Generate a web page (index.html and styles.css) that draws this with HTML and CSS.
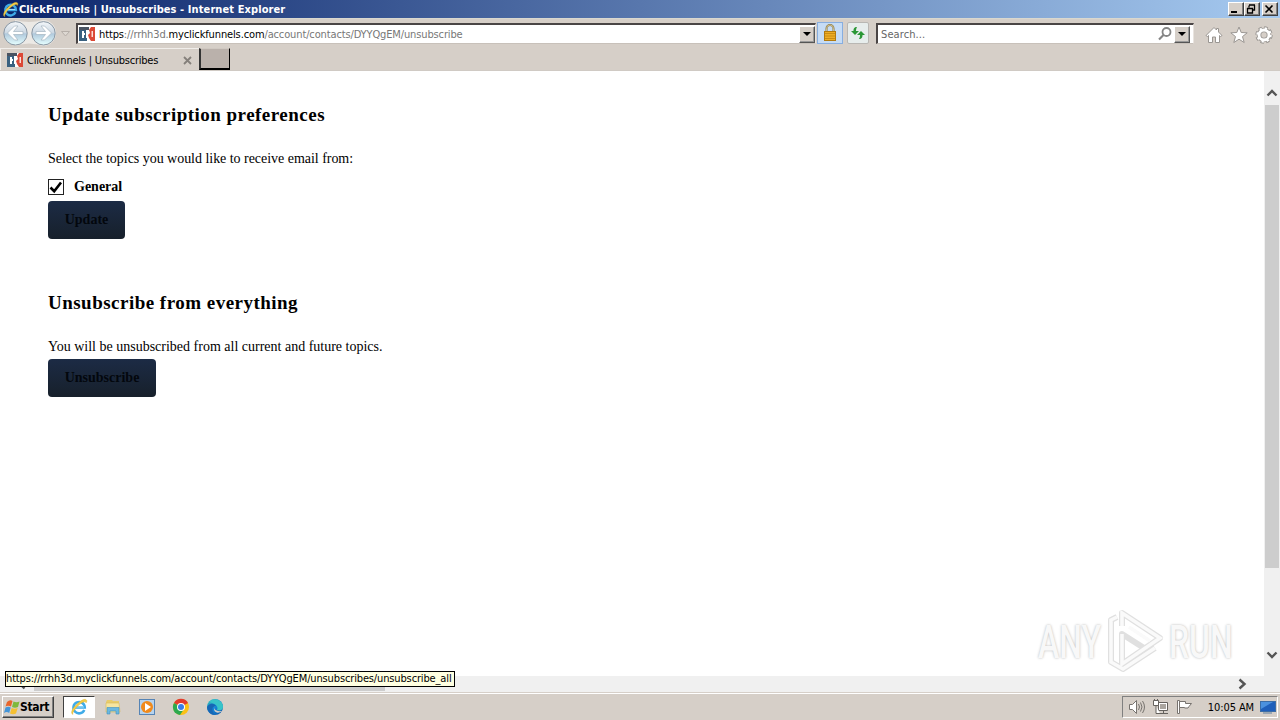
FILE: index.html
```
<!DOCTYPE html>
<html lang="en">

<head>
    <meta charset="utf-8">
    <title>ClickFunnels | Unsubscribes</title>
    <link rel="stylesheet" href="styles.css">
</head>

<body>
    <!-- shared icons -->
    <svg class="defs" width="0" height="0">
        <linearGradient id="orb" x2="0" y2="1">
            <stop offset="0" stop-color="#f4f7fa" />
            <stop offset=".48" stop-color="#ccd8e3" />
            <stop offset=".52" stop-color="#b0c9dc" />
            <stop offset="1" stop-color="#e6ffff" />
        </linearGradient>
        <linearGradient id="edge-fill" x2="1" y2="1">
            <stop offset="0" stop-color="#35c1b1" />
            <stop offset=".5" stop-color="#1687d9" />
            <stop offset="1" stop-color="#0c4fa0" />
        </linearGradient>
        <symbol id="ie" viewBox="0 0 18 18">
            <path d="M14.300 12a5.700 5.700 0 1 1 .5-2.500H5" fill="none" stroke="#3fabe8" stroke-width="2.500" />
            <path d="M5 9h9" stroke="#a5e0fa" stroke-width="1" />
            <path d="M3 16.500c-3-1-1-6 4-10.500s8-5.500 9.500-4c.7.8.3 2-.5 3 0-2-3-1.500-7 2s-7 8-6 9.500z" fill="#f3cd45" stroke="#d0a024" stroke-width=".3" />
        </symbol>
        <symbol id="cf" viewBox="0 0 16 14">
            <path d="M0 0h16v14H0z" fill="#fff" />
            <path d="M0 0h10v3H7v8h1v3H0z" fill="#3a6180" />
            <path d="M0 0h10v3H0z" fill="#4a5361" />
            <path d="M3 4h2v2h1v2H5v3H3z" fill="#fff" />
            <path d="M16 0h-4l-2 3 1 3-2 2 1 3 2 3h4z" fill="#dc4936" />
            <path d="M12.500 4h1.500v6h-1.500z" fill="#fbdcd4" />
        </symbol>
    </svg>

    <div class="title-bar">
        <svg class="title-icon"><use href="#ie" /></svg>
        <span class="title-text">ClickFunnels | Unsubscribes - Internet Explorer</span>
        <div class="window-buttons">
            <button class="win-btn"><svg width="12" height="10"><path d="M2 7h6v2H2z" /></svg></button>
            <button class="win-btn"><svg width="12" height="10"><path d="M4 1h6M4 1.500v2M9.500 1v5H8M2 4.500h6M2.500 4v5h5V4" fill="none" stroke="#000" stroke-width="1.300" /></svg></button>
            <button class="win-btn close"><svg width="12" height="10"><path d="M2.500 1.500l7 7M9.500 1.500l-7 7" stroke="#000" stroke-width="1.600" /></svg></button>
        </div>
    </div>

    <div class="nav-bar">
        <svg class="nav-arrows" width="72" height="28" viewBox="0 0 72 28">
            <path d="M15 1Q29 5 43 1a12.500 12.500 0 0 1 0 26Q29 22 15 27z" fill="#ece9e5" />
            <g fill="url(#orb)" stroke="#8997a4">
                <circle cx="15.500" cy="14.300" r="11.700" />
                <circle cx="43.500" cy="14.300" r="11.700" />
            </g>
            <g fill="#fff" stroke="#a5b4c0" stroke-width=".7">
                <path d="M7.500 14l7-7h3.500l-4.500 5.500H23v3h-9.500l4.500 5.500h-3.500z" />
                <path d="M51.500 14l-7-7H41l4.500 5.500H36v3h9.500L41 21h3.500z" />
            </g>
            <path d="M61.500 12.500h8L65.500 17z" fill="#ddd8d2" stroke="#b6afa9" />
        </svg>
        <div class="field address">
            <svg class="favicon"><use href="#cf" /></svg>
            <span class="url"><b>https</b>://rrhh3d.<b>myclickfunnels.com</b>/account/contacts/DYYQgEM/unsubscribe</span>
            <button class="drop"></button>
        </div>
        <div class="tool lock">
            <svg width="16" height="18" viewBox="0 0 16 18">
                <path d="M4.500 8V4.500a3.500 3.500 0 0 1 7 0V8" fill="none" stroke="#8c7a45" stroke-width="2" />
                <path d="M4.500 8V4.500a3.500 3.500 0 0 1 7 0V8" fill="none" stroke="#e6d9a8" stroke-width=".7" />
                <rect x="2.500" y="7.500" width="11" height="9" fill="#eead25" stroke="#b17a10" />
                <path d="M3 9.500h10M3 12h10M3 14.500h10" stroke="#c98c14" />
            </svg>
        </div>
        <div class="tool refresh">
            <svg width="16" height="16" viewBox="0 0 16 16" fill="#2b9735">
                <path d="M7 2C4 2 3.500 4 3.500 6H1l4 4 4-4H6c0-1 0-2 1-4z" />
                <path d="M9 14c3 0 3.500-2 3.500-4H15l-4-4-4 4h3c0 1 0 2-1 4z" />
            </svg>
        </div>
        <div class="field search">
            <span class="placeholder">Search...</span>
            <svg width="16" height="16" viewBox="0 0 16 16" fill="none" stroke="#858585" stroke-width="1.800">
                <circle cx="9.500" cy="6" r="4" />
                <path d="M6.500 9L2 13.500" stroke-width="2.200" />
            </svg>
            <button class="drop"></button>
        </div>
        <div class="nav-tools">
            <svg width="18" height="18" viewBox="0 0 18 18" fill="#fff" stroke="#9a9692">
                <path d="M1 9.500L9 1.500l2.500 2.500V2.500h2V6L17 9.500l-1.500 1-1-1v7H10.500V11h-3v5.500H3.500v-7l-1 1z" />
            </svg>
            <svg width="18" height="18" viewBox="0 0 18 18" fill="#fff" stroke="#9a9692">
                <path d="M9 1l2.200 5.500 6 .3-4.700 3.800 1.700 5.900L9 13.200l-5.200 3.300 1.700-5.900L.8 6.800l6-.3z" />
            </svg>
            <svg width="18" height="18" viewBox="0 0 18 18">
                <g fill="none">
                    <circle cx="9" cy="9" r="7" stroke="#9a9692" stroke-width="3.400" stroke-dasharray="3.300 2.198" />
                    <circle cx="9" cy="9" r="5" stroke="#9a9692" stroke-width="4.600" />
                    <circle cx="9" cy="9" r="6.500" stroke="#fff" stroke-width="2.400" stroke-dasharray="2.100 3.005" />
                    <circle cx="9" cy="9" r="5" stroke="#fff" stroke-width="2.800" />
                </g>
            </svg>
        </div>
    </div>

    <div class="tab-bar">
        <div class="tab">
            <svg class="favicon"><use href="#cf" /></svg>
            <span class="tab-title">ClickFunnels | Unsubscribes</span>
            <svg width="9" height="9"><path d="M1 1l7 7M8 1L1 8" stroke="#85807b" stroke-width="1.800" /></svg>
        </div>
        <div class="new-tab"></div>
    </div>

    <div class="viewport">
        <div class="page">
            <h3>Update subscription preferences</h3>
            <p class="topics-text">Select the topics you would like to receive email from:</p>
            <div class="topic">
                <svg width="16" height="16">
                    <rect x=".5" y=".5" width="15" height="15" fill="#fff" stroke="#222" />
                    <path d="M2.500 8.500l3.700 3.700L13 3.500" fill="none" stroke="#000" stroke-width="2.600" />
                </svg>
                <label>General</label>
            </div>
            <button class="btn update">Update</button>

            <h3 class="second">Unsubscribe from everything</h3>
            <p>You will be unsubscribed from all current and future topics.</p>
            <button class="btn unsubscribe">Unsubscribe</button>
        </div>
        <div class="v-scroll">
            <svg width="12" height="8"><path d="M1.500 6.500L6 2l4.500 4.500" /></svg>
            <div class="v-thumb"></div>
            <svg width="12" height="8"><path d="M1.500 1.500L6 6l4.500-4.500" /></svg>
        </div>
        <div class="watermark">
            <span class="any">ANY</span>
            <svg width="60" height="68" viewBox="0 0 60 68" fill="none">
                <g stroke="#e0e0e0" stroke-width="6" stroke-linejoin="round">
                    <path d="M16 18V5l38 25-38 26V26l22 14" />
                    <path d="M11 9l-6 3v42l12 7 32-21" />
                </g>
                <g stroke="#fafafa" stroke-width="3.500">
                    <path d="M16 18V5l38 25-38 26V26" />
                    <path d="M11 9l-6 3v42l12 7 32-21M23 19l21 14" />
                </g>
            </svg>
            <span class="run">RUN</span>
        </div>
    </div>
    <div class="h-scroll">
        <svg width="8" height="12"><path d="M6.500 1.500L2 6l4.500 4.500" /></svg>
        <div class="h-thumb"></div>
        <svg width="9" height="12"><path d="M1.500 1.500L6.500 6l-5 4.500" /></svg>
    </div>
    <div class="status">https://rrhh3d.myclickfunnels.com/account/contacts/DYYQgEM/unsubscribes/unsubscribe_all</div>

    <div class="taskbar">
        <button class="start">
            <svg width="16" height="16" viewBox="0 0 16 16">
                <path d="M3 3q3-3 5.500-1L7 7.500q-3-1.500-5.500 0z" fill="#e8652b" />
                <path d="M9.500 2.500q3 1.500 6 0L14 8q-3 1.500-6 0z" fill="#7fb93c" />
                <path d="M1.500 8.500q3-1.500 5.200 0L5.200 14q-2.500-2-5.200 0z" fill="#4495d8" />
                <path d="M7.700 9q3 1.500 6 0L12 14.500q-3 1.500-6 0z" fill="#f5c032" />
            </svg>
            Start
        </button>
        <div class="task active"><svg width="18" height="18"><use href="#ie" /></svg></div>
        <div class="task">
            <svg width="18" height="18" viewBox="0 0 18 18">
                <path d="M2 4l1-2h5l1 1h6v3H2z" fill="#e8cc6c" />
                <path d="M2 5h13l1 9H2z" fill="#f6e5a0" stroke="#d7b95a" stroke-width=".6" />
                <path d="M3 16V9.500h12V16h-3v-3H6v3z" fill="#6bb8e0" stroke="#3f91bd" stroke-width=".6" />
            </svg>
        </div>
        <div class="task">
            <svg width="18" height="18" viewBox="0 0 18 18">
                <rect x="1.500" y="1.500" width="15" height="15" fill="#b6d3ee" stroke="#5684b5" />
                <circle cx="9" cy="9" r="6" fill="#f08a1c" />
                <path d="M7 5l6 4-6 4z" fill="#fff" />
            </svg>
        </div>
        <div class="task">
            <svg width="18" height="18" viewBox="0 0 18 18">
                <circle cx="9" cy="9" r="8" fill="#fbc116" />
                <path d="M9 9L2 5a8 8 0 0 1 14 0z" fill="#e33b2e" />
                <path d="M9 9L2 5a8 8 0 0 0 6 12l4-6z" fill="#2da94f" />
                <circle cx="9" cy="9" r="4" fill="#fff" />
                <circle cx="9" cy="9" r="3" fill="#3a7de8" />
            </svg>
        </div>
        <div class="task">
            <svg width="18" height="18" viewBox="0 0 18 18">
                <circle cx="9" cy="9" r="8" fill="url(#edge-fill)" />
                <path d="M3 4a8 8 0 0 1 14 5c0 3-3 4-6 3 2-4-3-7-8-8z" fill="#38c4c8" />
                <path d="M9 8c-2 2 0 6 7 5-5 4-10 0-7-5z" fill="#d5cec7" />
                <path d="M1 9c2-4 7-4 9-1-4 0-5 4-1 9-5 0-8-4-8-8z" fill="#1767b5" />
            </svg>
        </div>
        <div class="tray">
            <svg width="18" height="16" viewBox="0 0 18 16" fill="#fff" stroke="#77736f">
                <path d="M1.500 5.500h3l4-4v13l-4-4h-3z" />
                <path d="M10.500 5q2 3 0 6M12.500 3.500q3 4.500 0 9M14.500 2q4 6 0 12" fill="none" />
            </svg>
            <svg width="18" height="16" viewBox="0 0 18 16" fill="#fff" stroke="#65615d">
                <path d="M6.500 3.500h9v8h-9zM8 14.500h8M11.500 12v2" />
                <path d="M8 5h6v5H8z" fill="#aaa59f" stroke="none" />
                <path d="M1.500 1.500h5v5h-5zM2.500 0v2M5.500 0v2M4 6.500v8h4" />
            </svg>
            <svg width="18" height="16" viewBox="0 0 18 16" fill="#fff" stroke="#77736f">
                <path d="M1.500 1.500h2v13h-2z" />
                <path d="M3.500 2.500h6v2h6l-2.500 3-1 1.500h-3.500V8.500h-5z" />
            </svg>
            <span class="clock">10:05 AM</span>
            <svg width="16" height="14" viewBox="0 0 16 14">
                <rect x=".5" y="1.500" width="15" height="10" fill="#1f5fba" stroke="#3c6da6" />
                <path d="M1 2h12L1 9z" fill="#4b91de" />
                <path d="M3 13h9" stroke="#5f7f9d" />
            </svg>
        </div>
    </div>
</body>

</html>
```
FILE: styles.css
```
* {
    box-sizing: border-box;
}

body {
    margin: 0;
    width: 1280px;
    height: 720px;
    display: flex;
    flex-direction: column;
    overflow: hidden;
    position: relative;
    background: #fff;
    font: 11px "DejaVu Sans Condensed", "DejaVu Sans", sans-serif;
    font-stretch: condensed;
    color: #000;
    white-space: nowrap;
}

svg {
    flex: none;
    display: block;
}

button {
    margin: 0;
    padding: 0;
    font: inherit;
    color: #000;
}

.defs {
    position: absolute;
}

/* Title bar */
.title-bar {
    height: 18px;
    display: flex;
    align-items: center;
    padding: 0 2px;
    background: linear-gradient(to right, #0a246a, #a6caf0);
    color: #fff;
    font-weight: bold;
}

.title-icon {
    width: 17px;
    height: 17px;
}

.title-text {
    letter-spacing: 0.09px;
}

.window-buttons {
    display: flex;
    margin-left: auto;
}

.win-btn {
    width: 16px;
    height: 14px;
    background: #d6cfc8;
    border: 1px solid;
    border-color: #fff #404040 #404040 #fff;
    box-shadow: inset -1px -1px #808080;
}

.close {
    margin-left: 2px;
}

/* Address row */
.nav-bar {
    height: 30px;
    display: flex;
    align-items: flex-start;
    background: #d6cfc8;
    border-top: 1px solid #d9d8cf;
}

.nav-arrows {
    margin-right: 4px;
}

.field {
    height: 21px;
    margin-top: 4px;
    display: flex;
    align-items: center;
    background: #fff;
    border: 1px solid;
    border-width: 2px 1px 1px 2px;
    border-color: #4a4545 #e9e4df #c8c1ba #4a4545;
}

.address {
    width: 740px;
    padding-left: 1px;
}

.favicon {
    width: 16px;
    height: 14px;
}

.url {
    margin-left: 4px;
    color: #777;
    letter-spacing: -0.13px;
}

.url b {
    font-weight: normal;
    color: #000;
}

.drop {
    width: 16px;
    height: 17px;
    margin-left: auto;
    background: #d6cfc8;
    border: 1px solid;
    border-color: #fff #555 #555 #fff;
    box-shadow: inset -1px -1px #999;
    display: flex;
    align-items: center;
    justify-content: center;
}

.drop::after {
    content: "";
    border: 4px solid transparent;
    border-top-color: #000;
    border-bottom: 0;
}

.tool {
    height: 22px;
    margin-top: 3px;
    display: flex;
    align-items: center;
    justify-content: center;
}

.lock {
    width: 26px;
    margin-left: 1px;
    background: #c6dcf5;
    border: 1px solid #87aee0;
}

.refresh {
    width: 22px;
    margin-left: 4px;
    background: #e7edec;
    border: 1px solid #b9b7b3;
    border-radius: 2px;
}

.search {
    width: 318px;
    margin-left: 7px;
    padding-right: 3px;
}

.placeholder {
    margin-left: 3px;
    margin-right: auto;
    color: #666;
    letter-spacing: 0.1px;
}

.search .drop {
    margin-left: 1px;
}

.nav-tools {
    display: flex;
    gap: 7px;
    margin: 7px 0 0 11px;
}

/* Tabs */
.tab-bar {
    height: 23px;
    display: flex;
    background: #d6cfc8;
    border-bottom: 1px solid #d0cac4;
}

.tab {
    width: 199px;
    display: flex;
    align-items: center;
    padding: 1px 7px 0 6px;
    border-top: 1px solid #f1eeeb;
    border-left: 1px solid #f1eeeb;
}

.tab-title {
    margin: 0 auto 0 4px;
    letter-spacing: -0.23px;
}

.new-tab {
    width: 31px;
    height: 22px;
    background: #bab1ab;
    border: 1px solid;
    border-width: 1px 1px 2px 2px;
    border-color: #d0c9c2 #000 #000 #333;
}

/* Page content */
.viewport {
    height: 605px;
    display: flex;
    position: relative;
}

.page {
    width: 1264px;
    padding: 33px 48px 0;
    font-family: "Liberation Serif", "Times New Roman", serif;
    font-size: 14px;
}

.page h3 {
    margin: 0;
    height: 22px;
    line-height: 22px;
    font-size: 19px;
    letter-spacing: 0.48px;
}

.page p {
    margin: 23px 0 0;
    height: 20px;
    line-height: 20px;
}

.page .topics-text {
    letter-spacing: -0.03px;
}

.topic {
    height: 22px;
    margin-top: 7px;
    display: flex;
    align-items: center;
    gap: 10px;
    font-weight: bold;
}

.topic label {
    line-height: 20px;
}

.btn {
    display: block;
    height: 38px;
    border: 0;
    border-radius: 4px;
    background: linear-gradient(#1c2b45, #17202b);
    color: #03070d;
    font-weight: bold;
}

.update {
    width: 77px;
    margin-top: 3px;
}

.unsubscribe {
    width: 108px;
    margin-top: 2px;
}

.page .second {
    margin-top: 53px;
}

/* Scrollbars */
.v-scroll {
    width: 16px;
    display: flex;
    flex-direction: column;
    align-items: center;
    padding: 18px 0 17px;
    background: #f0f0f0;
}

.v-scroll path,
.h-scroll path {
    fill: none;
    stroke: #555;
    stroke-width: 2.4;
}

.v-thumb {
    width: 14px;
    height: 463px;
    margin: 8px 0 auto;
    background: #cdcdcd;
}

.h-scroll {
    height: 16px;
    display: flex;
    align-items: center;
    padding: 0 33px 0 18px;
    background: #f0f0f0;
}

.h-thumb {
    width: 351px;
    height: 14px;
    margin: 0 auto 0 8px;
    background: #cdcdcd;
}

.status {
    position: absolute;
    left: 5px;
    top: 671px;
    width: 450px;
    height: 16px;
    line-height: 14px;
    letter-spacing: -0.14px;
    background: #ffffe1;
    border: 1px solid #000;
}

.watermark {
    position: absolute;
    left: 1038px;
    top: 537px;
    display: flex;
    align-items: center;
    font: 500 47px/68px Roboto, sans-serif;
    color: #f8f8f8;
    text-shadow: 0 0 3px #b5b5b5;
}

.watermark svg {
    margin: 0 3px 0 6px;
}

.watermark span {
    width: 62px;
    transform: scaleX(0.68);
    transform-origin: left;
}

/* Taskbar */
.taskbar {
    height: 28px;
    display: flex;
    align-items: center;
    padding: 1px 2px 0;
    background: #d6cfc8;
    border-top: 1px solid #d6cfc8;
    box-shadow: inset 0 1px #fff;
}

.start {
    width: 52px;
    height: 22px;
    display: flex;
    align-items: center;
    padding-left: 1px;
    background: #d6cfc8;
    border: 1px solid;
    border-color: #fff #404040 #404040 #fff;
    box-shadow: inset -1px -1px #808080;
    font-size: 12px;
    font-weight: bold;
    letter-spacing: -0.3px;
}

.task {
    width: 34px;
    height: 22px;
    display: flex;
    align-items: center;
    justify-content: center;
}

.active {
    width: 32px;
    margin: 0 1px 0 9px;
    background: #fff;
    border: 1px solid;
    border-color: #404040 #fff #fff #404040;
}

.tray {
    width: 156px;
    height: 22px;
    margin-left: auto;
    display: flex;
    align-items: center;
    gap: 6px;
    padding: 0 1px 0 5px;
    border: 1px solid;
    border-color: #808080 #fff #fff #808080;
}

.clock {
    margin: 0 0 0 auto;
    letter-spacing: -0.1px;
}
```
